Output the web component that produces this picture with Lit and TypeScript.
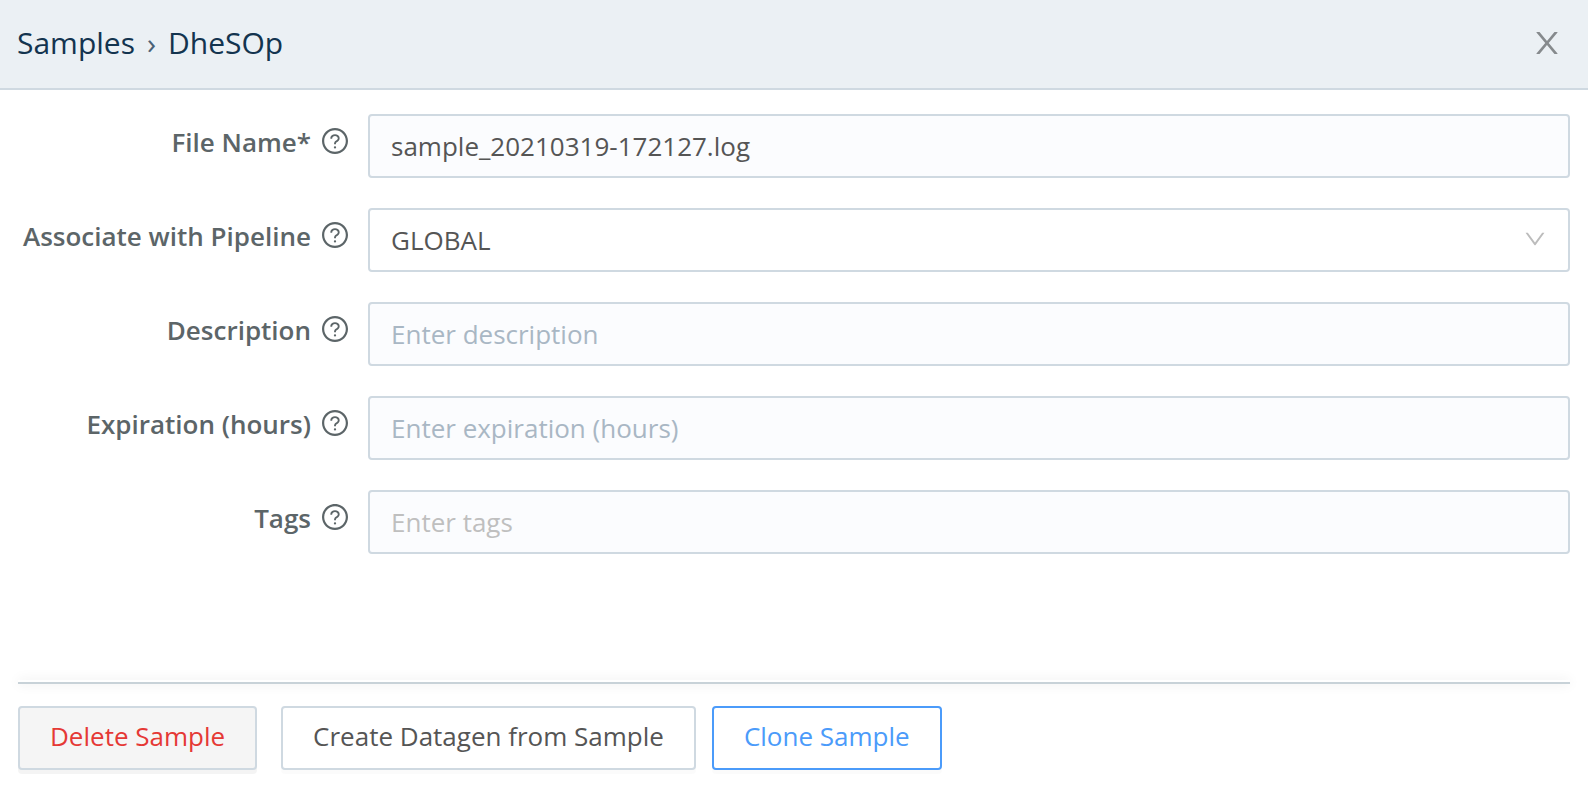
import { LitElement, html, css, svg } from "lit";
import { customElement } from "lit/decorators.js";

const closePath =
  "M563.8 512l262.5-312.9c4.4-5.2.7-13.1-6.1-13.1h-79.8c-4.7 0-9.2 2.1-12.3 5.7L511.6 449.8 295.1 191.7c-3-3.6-7.5-5.7-12.3-5.7H203c-6.8 0-10.5 7.9-6.1 13.1L459.4 512 196.9 824.9A7.95 7.95 0 0 0 203 838h79.8c4.7 0 9.2-2.1 12.3-5.7l216.5-258.1 216.5 258.1c3 3.6 7.5 5.7 12.3 5.7h79.8c6.8 0 10.5-7.9 6.1-13.1L563.8 512z";
const downPath =
  "M884 256h-75c-5.1 0-9.9 2.5-12.9 6.6L512 654.2 227.9 262.6c-3-4.1-7.8-6.6-12.9-6.6h-75c-6.5 0-10.3 7.4-6.5 12.7l352.6 486.1c12.8 17.6 39 17.6 51.7 0l352.6-486.1c3.9-5.3.1-12.7-6.4-12.7z";
const ringPath =
  "M512 64C264.6 64 64 264.6 64 512s200.6 448 448 448 448-200.6 448-448S759.4 64 512 64zm0 820c-205.4 0-372-166.6-372-372s166.6-372 372-372 372 166.6 372 372-166.6 372-372 372z";
const questionPath =
  "M623.6 316.7C593.6 290.4 554 276 512 276s-81.6 14.5-111.6 40.7C369.2 344 352 380.7 352 420v7.6c0 4.4 3.6 8 8 8h48c4.4 0 8-3.6 8-8V420c0-44.1 43.1-80 96-80s96 35.9 96 80c0 31.1-22 59.6-56.1 72.7-21.2 8.1-39.2 22.3-52.1 40.9-13.1 19-19.9 41.8-19.9 64.9V620c0 4.4 3.6 8 8 8h48c4.4 0 8-3.6 8-8v-22.7a48.3 48.3 0 0 1 30.9-44.8c59-22.7 97.1-74.7 97.1-132.5.1-39.3-17.1-76-48.3-103.3zM472 732a40 40 0 1 0 80 0 40 40 0 1 0-80 0z";

const icon = (name: string, ...paths: string[]) => html`
  <svg class="icon ${name}" viewBox="64 64 896 896" aria-hidden="true">
    ${paths.map((d) => svg`<path d=${d}></path>`)}
  </svg>
`;

interface Field {
  id: string;
  label: string;
  value?: string;
  placeholder?: string;
  options?: string[];
}

const fields: Field[] = [
  { id: "file-name", label: "File Name*", value: "sample_20210319-172127.log" },
  { id: "pipeline", label: "Associate with Pipeline", options: ["GLOBAL"] },
  { id: "description", label: "Description", placeholder: "Enter description" },
  { id: "expiration", label: "Expiration (hours)", placeholder: "Enter expiration (hours)" },
  { id: "tags", label: "Tags", placeholder: "Enter tags" },
];

@customElement("app-root")
export class AppRoot extends LitElement {
  static styles = css`
    :host {
      display: flex;
      flex-direction: column;
      min-height: 100vh;
      background: #fff;
      color: #555;
      font: 26px/36px "Open Sans", "Noto Sans", sans-serif;
    }
    * {
      box-sizing: border-box;
    }
    button,
    input,
    select {
      font: inherit;
      color: inherit;
      margin: 0;
    }
    .icon {
      display: block;
      fill: currentColor;
    }
    .header {
      display: flex;
      align-items: center;
      justify-content: space-between;
      padding: 21px 26px 23px 17px;
      background: #ebf0f4;
      border-bottom: 2px solid #cfd9e1;
    }
    .crumbs {
      display: flex;
      align-items: center;
      gap: 12px;
      font-size: 30px;
      line-height: 44px;
      color: #13344f;
    }
    .crumbs a {
      color: inherit;
      text-decoration: none;
    }
    .sep {
      color: #4a6276;
    }
    .bare {
      display: block;
      padding: 0;
      border: 0;
      background: none;
      cursor: pointer;
    }
    .close {
      color: #868a8d;
    }
    .close-icon {
      width: 30px;
      height: 30px;
    }
    .form {
      flex: 1;
      display: flex;
      flex-direction: column;
      gap: 30px;
      padding: 24px 18px;
    }
    .row {
      display: grid;
      grid-template-columns: 330px 1fr;
      column-gap: 20px;
      align-items: start;
    }
    .caption {
      display: flex;
      align-items: flex-start;
      justify-content: flex-end;
      gap: 11px;
      color: #5c6568;
    }
    .caption label {
      font-weight: 600;
      line-height: 56px;
      white-space: nowrap;
    }
    .help {
      padding: 14px 0;
    }
    .help-icon {
      width: 26px;
      height: 26px;
    }
    .control {
      display: grid;
      align-items: center;
    }
    .box {
      grid-area: 1 / 1;
      width: 100%;
      min-width: 0;
      height: 64px;
      padding: 0 21px;
      border: 2px solid #cfd9e1;
      border-radius: 4px;
      background: #fbfcfe;
      outline: none;
    }
    .box:focus {
      border-color: #4b9bfa;
    }
    .box::placeholder {
      color: #a9b7c4;
      opacity: 1;
    }
    .box.tags::placeholder {
      color: #bfbfbf;
    }
    .select {
      appearance: none;
      background: #fff;
    }
    .down-icon {
      grid-area: 1 / 1;
      justify-self: end;
      width: 22px;
      height: 22px;
      margin: 0 24px 2px 0;
      color: #bcbcbc;
      pointer-events: none;
    }
    .footer {
      padding: 0 18px 22px;
    }
    .rule {
      height: 4px;
      margin: 0 0 22px;
      border: 0;
      border-bottom: 2px solid #c8d2d8;
      background: #fff;
      box-shadow: 0 0 12px rgba(0, 0, 0, 0.1);
    }
    .actions {
      display: flex;
      flex-wrap: wrap;
      gap: 16px;
    }
    .btn {
      height: 64px;
      padding: 0 30px 4px;
      border: 2px solid #cfd9e1;
      border-radius: 4px;
      background: #fff;
      box-shadow: 0 4px 0 rgba(0, 0, 0, 0.016);
      cursor: pointer;
    }
    .danger {
      margin-right: 8px;
      color: #e53935;
      background: #f5f5f5;
      box-shadow: 0 4px 0 rgba(0, 0, 0, 0.043);
    }
    .primary {
      color: #4b9bfa;
      border-color: #4b9bfa;
    }
  `;

  private control(f: Field) {
    if (f.options) {
      return html`
        <select class="box select" id=${f.id}>
          ${f.options.map((o) => html`<option>${o}</option>`)}
        </select>
        ${icon("down-icon", downPath)}
      `;
    }
    return html`<input
      class="box ${f.id}"
      id=${f.id}
      type="text"
      .value=${f.value ?? ""}
      placeholder=${f.placeholder ?? ""}
    />`;
  }

  render() {
    return html`
      <header class="header">
        <nav class="crumbs" aria-label="Breadcrumb">
          <a href="#samples">Samples</a>
          <span class="sep" aria-hidden="true">›</span>
          <span>DheSOp</span>
        </nav>
        <button class="bare close" type="button" aria-label="Close">
          ${icon("close-icon", closePath)}
        </button>
      </header>
      <form class="form">
        ${fields.map(
          (f) => html`
            <div class="row">
              <div class="caption">
                <label for=${f.id}>${f.label}</label>
                <button class="bare help" type="button" aria-label="Help: ${f.label}">
                  ${icon("help-icon", ringPath, questionPath)}
                </button>
              </div>
              <div class="control">${this.control(f)}</div>
            </div>
          `
        )}
      </form>
      <footer class="footer">
        <hr class="rule" />
        <div class="actions">
          <button class="btn danger" type="button">Delete Sample</button>
          <button class="btn" type="button">Create Datagen from Sample</button>
          <button class="btn primary" type="button">Clone Sample</button>
        </div>
      </footer>
    `;
  }
}
